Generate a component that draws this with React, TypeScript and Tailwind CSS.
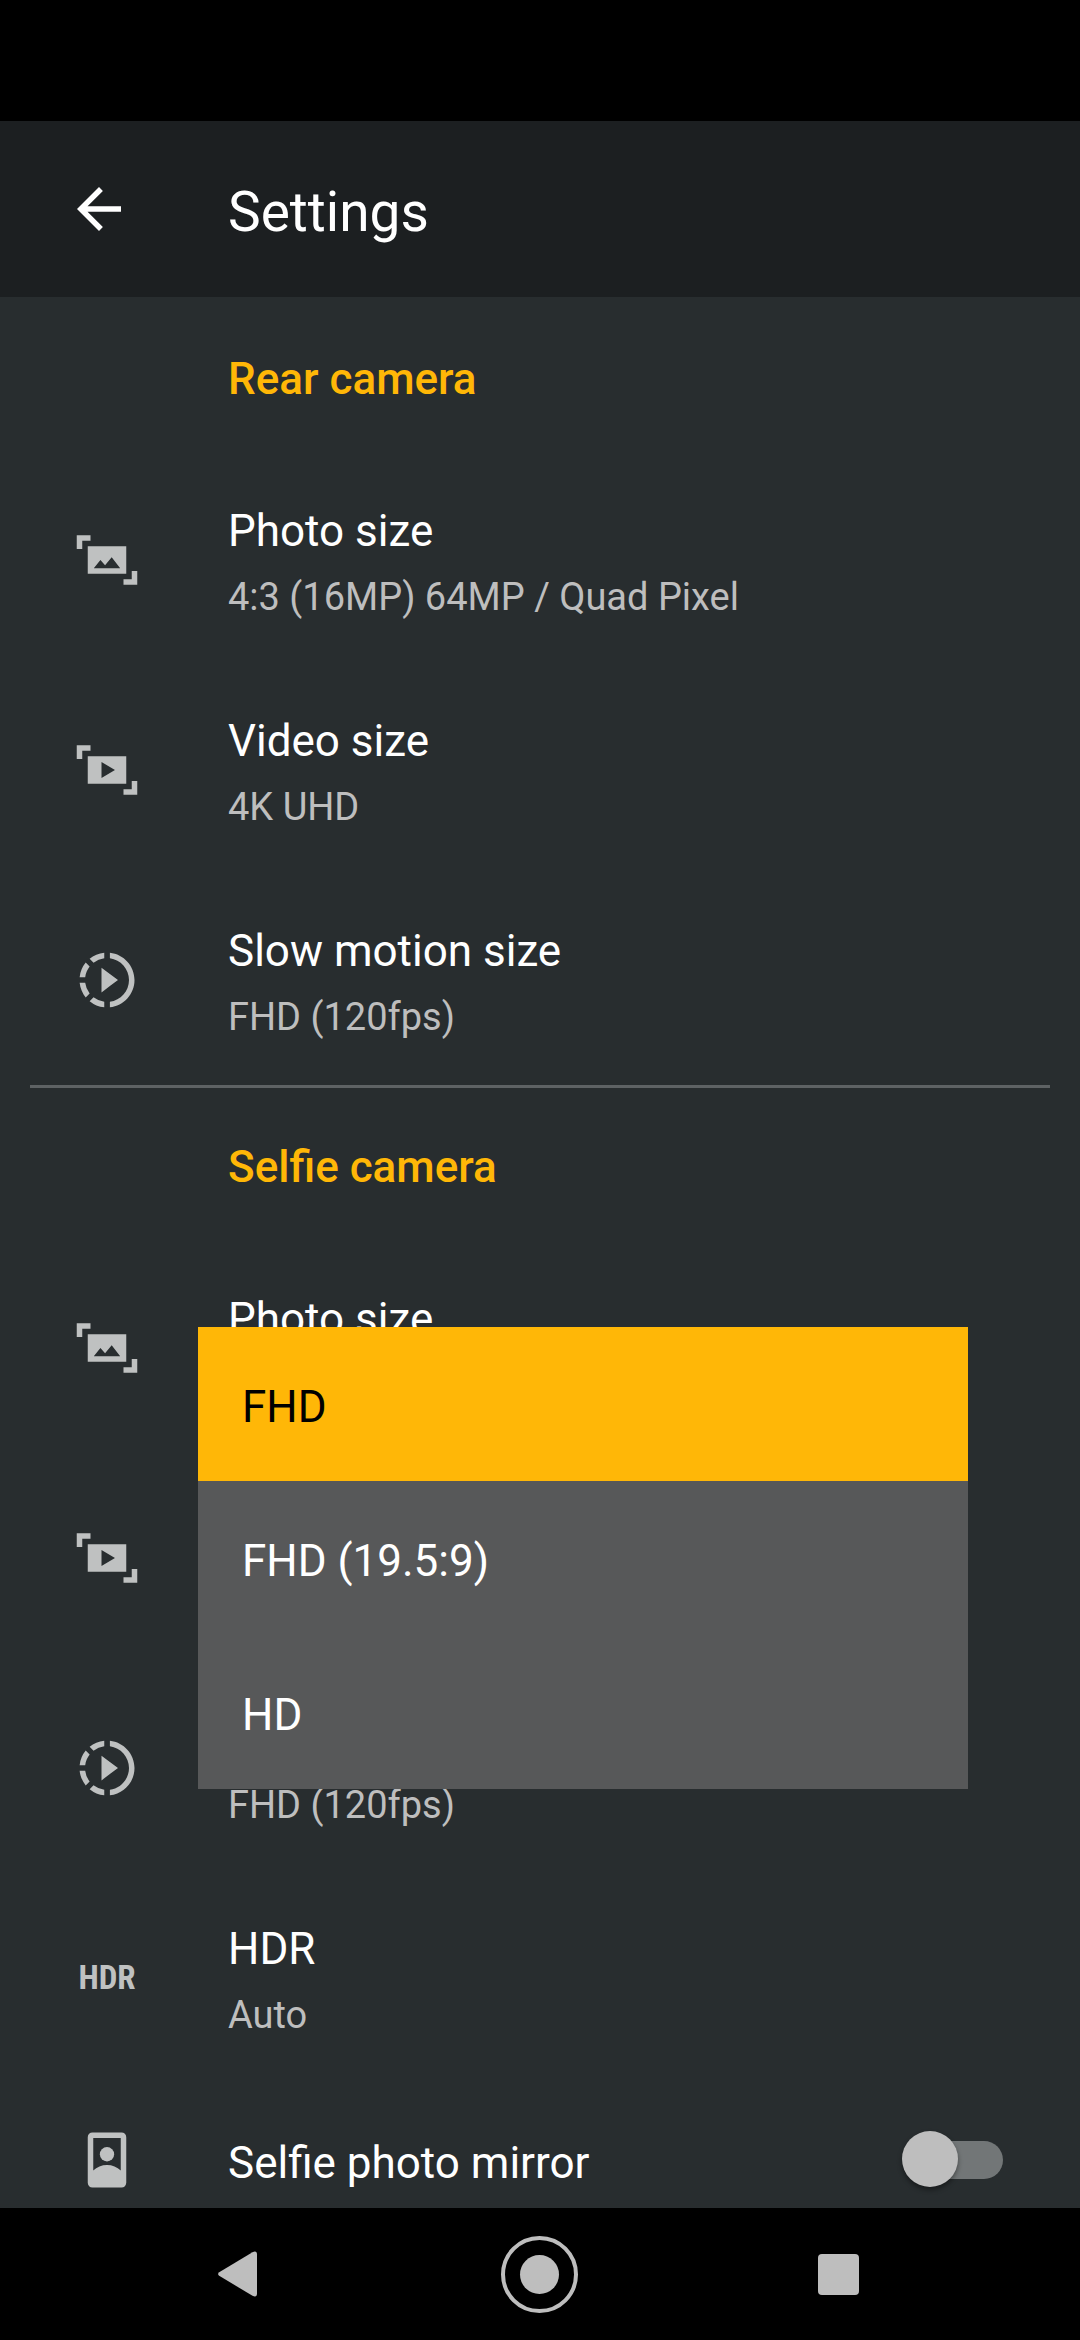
import { useState } from "react"
import type { ReactNode } from "react"
import { MdArrowBack, MdSlowMotionVideo } from "react-icons/md"

function PhotoSizeIcon() {
  return (
    <svg viewBox="0 0 24 24" className="size-[66px]" fill="currentColor" fillRule="evenodd" aria-hidden="true">
      <path d="M1 3h5v2H3v3H1z" />
      <path d="M5 7h14v10H5zM7.2 15h9.6l-3.1-4-2.4 2.9L9.6 12z" />
      <path d="M21 16h2v5h-5v-2h3z" />
    </svg>
  )
}

function VideoSizeIcon() {
  return (
    <svg viewBox="0 0 24 24" className="size-[66px]" fill="currentColor" fillRule="evenodd" aria-hidden="true">
      <path d="M1 3h5v2H3v3H1z" />
      <path d="M5 7h14v10H5zM10 9.1v5.8l4.9-2.9z" />
      <path d="M21 16h2v5h-5v-2h3z" />
    </svg>
  )
}

function MirrorIcon() {
  return (
    <svg viewBox="0 0 24 24" className="size-[66px]" fill="currentColor" fillRule="evenodd" aria-hidden="true">
      <path d="M6.7 2h10.6A1.7 1.7 0 0 1 19 3.7v16.6a1.7 1.7 0 0 1-1.7 1.7H6.7A1.7 1.7 0 0 1 5 20.300V3.700A1.700 1.700 0 0 1 6.700 2zM7 4v11.800c1.300-1.300 3.100-2 5-2s3.700.7 5 2V4z" />
      <circle cx="12" cy="9.9" r="2.6" />
    </svg>
  )
}

function SlowMotionIcon() {
  return <MdSlowMotionVideo className="size-[66px]" aria-hidden="true" />
}

function HdrIcon() {
  return (
    <span className="font-['Roboto_Condensed','Liberation_Sans_Narrow','Roboto',sans-serif] text-[33px] leading-[40px] font-bold">
      HDR
    </span>
  )
}

type RowProps = {
  icon: ReactNode
  title: string
  value: string
  menuOpen?: boolean
  onClick?: () => void
}

function SettingRow({ icon, title, value, menuOpen = false, onClick }: RowProps) {
  return (
    <button type="button" onClick={onClick} className="flex min-h-[210px] w-full items-center gap-[88px] pl-[74px] text-left">
      <span className="flex w-[66px] shrink-0 justify-center text-[#bfc1c1]">{icon}</span>
      {/* the open menu takes the place of its row's text */}
      <span className={menuOpen ? "invisible" : "flex flex-col gap-[9px] pt-[5px]"}>
        <span className="text-[44px] leading-[60px] text-white">{title}</span>
        <span className="text-[38px] leading-[54px] text-[#bebebe]">{value}</span>
      </span>
    </button>
  )
}

function SectionTitle({ children }: { children: ReactNode }) {
  return (
    <h2 className="flex h-[158px] items-center pt-[5px] pl-[228px] text-[44px] leading-[60px] font-medium text-[#ffb707]">
      {children}
    </h2>
  )
}

const videoSizes = ["FHD", "FHD (19.5:9)", "HD"]

export default function App() {
  const [videoSize, setVideoSize] = useState("FHD")
  const [menuOpen, setMenuOpen] = useState(true)
  const [mirror, setMirror] = useState(false)

  return (
    <div className="flex h-screen flex-col bg-[#282d2f] font-['Roboto',sans-serif]">
      <div className="h-[121px] shrink-0 bg-black" />

      <header className="flex h-[176px] shrink-0 items-center bg-[#1c1f21] pl-[66px] text-white">
        <button type="button" aria-label="Back">
          <MdArrowBack className="size-[66px]" />
        </button>
        <h1 className="pt-[6px] pl-[96px] text-[55px] leading-[66px]">Settings</h1>
      </header>

      <main className="min-h-0 flex-1 overflow-y-auto [scrollbar-width:none]">
        <section>
          <SectionTitle>Rear camera</SectionTitle>
          <SettingRow icon={<PhotoSizeIcon />} title="Photo size" value="4:3 (16MP) 64MP / Quad Pixel" />
          <SettingRow icon={<VideoSizeIcon />} title="Video size" value="4K UHD" />
          <SettingRow icon={<SlowMotionIcon />} title="Slow motion size" value="FHD (120fps)" />
        </section>

        {/* zero height so the rule sits on top of the section padding */}
        <div className="h-0 px-[30px]">
          <hr className="h-[3px] border-0 bg-[#5e6264]" />
        </div>

        <section>
          <SectionTitle>Selfie camera</SectionTitle>
          <SettingRow icon={<PhotoSizeIcon />} title="Photo size" value="4:3" />

          <div className="relative">
            <SettingRow
              icon={<VideoSizeIcon />}
              title="Video size"
              value={videoSize}
              menuOpen={menuOpen}
              onClick={() => setMenuOpen(true)}
            />
            {menuOpen && (
              <div role="listbox" aria-label="Video size" className="absolute -top-[126px] right-[112px] left-[198px] z-10 flex flex-col bg-[#575859]">
                {videoSizes.map((size) => (
                  <button
                    key={size}
                    type="button"
                    role="option"
                    aria-selected={size === videoSize}
                    onClick={() => {
                      setVideoSize(size)
                      setMenuOpen(false)
                    }}
                    className="flex h-[154px] items-center px-[44px] pt-[5px] text-left text-[44px] leading-[60px] text-white aria-selected:bg-[#ffb707] aria-selected:text-black"
                  >
                    {size}
                  </button>
                ))}
              </div>
            )}
          </div>

          <SettingRow icon={<SlowMotionIcon />} title="Slow motion size" value="FHD (120fps)" />
          <SettingRow icon={<HdrIcon />} title="HDR" value="Auto" />

          <label className="flex min-h-[154px] items-center gap-[88px] pr-[77px] pl-[74px]">
            <span className="flex w-[66px] shrink-0 justify-center text-[#bfc1c1]">
              <MirrorIcon />
            </span>
            <span className="flex-1 pt-[5px] text-[44px] leading-[60px] text-white">Selfie photo mirror</span>
            <span className="relative flex h-[56px] w-[101px] items-center">
              <input
                type="checkbox"
                role="switch"
                checked={mirror}
                onChange={(e) => setMirror(e.target.checked)}
                className="peer ml-[5px] h-[38px] w-[96px] appearance-none rounded-full bg-[#727677]"
              />
              <span className="pointer-events-none absolute -top-px left-0 size-[56px] rounded-full bg-[#bebebe] shadow-[0_3px_5px_rgba(0,0,0,0.4)] peer-checked:right-0 peer-checked:left-auto" />
            </span>
          </label>
        </section>
      </main>

      <nav className="grid h-[132px] shrink-0 grid-cols-3 items-center justify-items-center bg-black px-[92px] text-[#bebebe]">
        <button type="button" aria-label="Back">
          <svg viewBox="0 0 46 46" className="size-[46px]" fill="currentColor" aria-hidden="true">
            <path d="M1.200 21.200 34.500 1.200Q39 -.8 39 3.500V42.500Q39 46.800 34.500 44.800L1.200 24.800Q-1 23 1.200 21.200z" />
          </svg>
        </button>
        <button type="button" aria-label="Home" className="flex size-[77px] items-center justify-center rounded-full border-4 border-[#bebebe]">
          <span className="size-[39px] rounded-full bg-[#bebebe]" />
        </button>
        <button type="button" aria-label="Recent apps" className="size-[41px] rounded-[4px] bg-[#bebebe]" />
      </nav>
    </div>
  )
}
